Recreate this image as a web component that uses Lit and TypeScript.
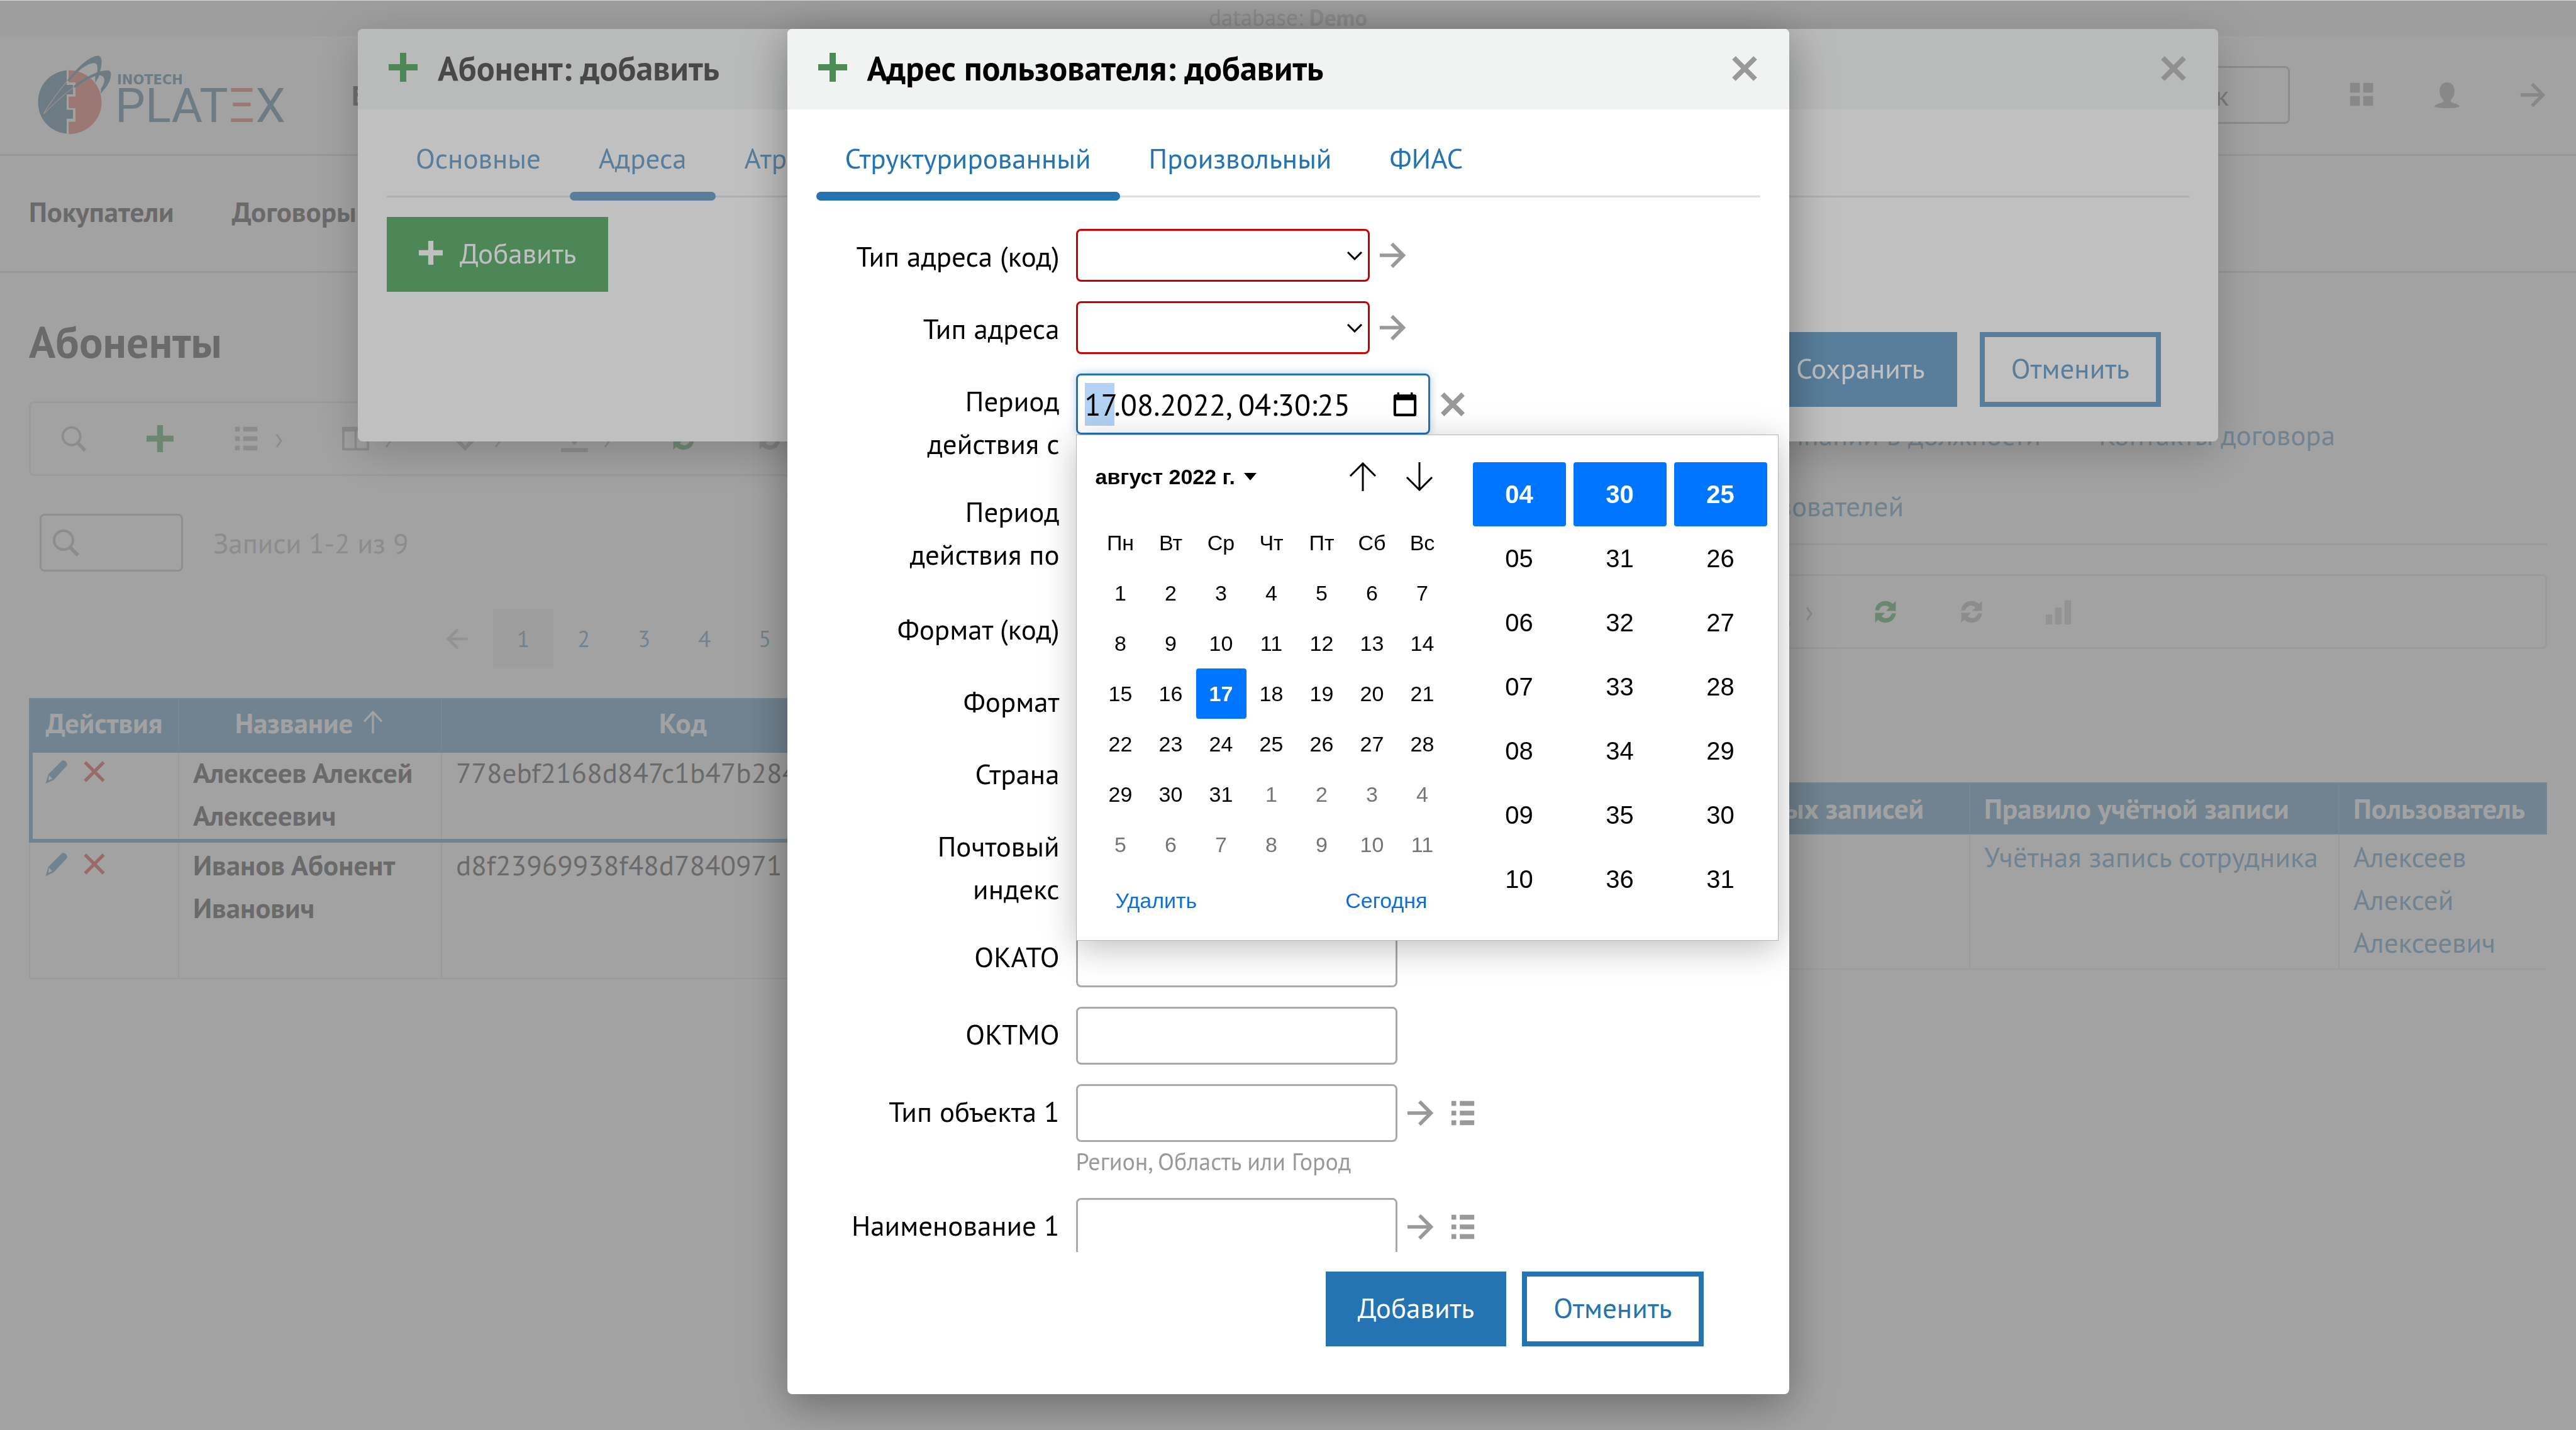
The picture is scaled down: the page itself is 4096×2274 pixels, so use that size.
import { LitElement, html, css, svg, nothing } from "lit";
import { customElement, query } from "lit/decorators.js";
import { classMap } from "lit/directives/class-map.js";

/* ---------- icons ---------- */

const icons = {
  plus: svg`<path d="M18 0h10v18h18v10H28v18H18V28H0V18h18z"/>`,
  close: svg`<path d="M6 6 40 40M40 6 6 40" fill="none" stroke="currentColor" stroke-width="8"/>`,
  arrow: svg`<path d="M2 23H40M22 4 41 23 22 42" fill="none" stroke="currentColor" stroke-width="6"/>`,
  list: svg`<path d="M4 3h8v8H4zM18 3h24v8H18zM4 19h8v8H4zM18 19h24v8H18zM4 35h8v8H4zM18 35h24v8H18z"/>`,
  search: svg`<circle cx="19" cy="19" r="15" fill="none" stroke="currentColor" stroke-width="4"/><path d="M30 31 42 43" fill="none" stroke="currentColor" stroke-width="6"/>`,
  columns: svg`<path d="M0 3h46v40H0zM4 11v28h17V11zM25 11v28h17V11z" fill-rule="evenodd"/>`,
  heart: svg`<path d="M23 44 2 22C-2 10 12 2 23 13 34 2 48 10 44 22zM23 35 35 21C33 16 27 16 23 21 19 16 13 16 11 21z" fill-rule="evenodd"/>`,
  download: svg`<path d="M19 2h8v16h10L23 34 9 18h10zM0 39h46v7H0z"/>`,
  grid: svg`<path d="M3 2h17v17H3zM26 2h17v17H26zM3 25h17v17H3zM26 25h17v17H26z"/>`,
  user: svg`<path d="M23 1c9 0 13 7 13 15 0 8-3 12-7 17 0 5 14 4 16 10-5 3-13 3-22 3S6 46 1 43c2-6 16-5 16-10-4-5-7-9-7-17C10 8 14 1 23 1z"/>`,
  bars: svg`<path d="M2 28h11v17H2zM18 16h11v29H18zM34 4h11v41H34z"/>`,
  pencil: svg`<path d="M3 45 8 28 33 3c5-2 11 4 9 9L18 38zM8 39l7-3-6-6z" fill-rule="evenodd"/>`,
  cross: svg`<path d="M6 6 40 40M40 6 6 40" fill="none" stroke="currentColor" stroke-width="6"/>`,
  up: svg`<path d="M23 44V4M6 21 23 3 40 21" fill="none" stroke="currentColor" stroke-width="4"/>`,
  thinUp: svg`<path d="M23 46V2M3 22 23 2 43 22" fill="none" stroke="currentColor" stroke-width="3"/>`,
  thinDown: svg`<path d="M23 0V44M3 24 23 44 43 24" fill="none" stroke="currentColor" stroke-width="3"/>`,
  calendar: svg`<path d="M8 0h4v4h22V0h4v4h3q4 0 4 4v34q0 4-4 4H5q-4 0-4-4V8q0-4 4-4h3zM6 15v26h34V15z" fill-rule="evenodd"/>`,
  refresh: svg`<path d="M2 20C3 8 12 1 23 1c6 0 11 2 15 6l6-6v20H24l7-7c-8-7-18-4-21 6zM44 26C43 38 34 45 23 45c-6 0-11-2-15-6l-6 6V25h20l-7 7c8 7 18 4 21-6z"/>`,
};
type IconName = keyof typeof icons;

const icon = (name: IconName, cls = "") =>
  html`<svg class="icon ${cls}" viewBox="0 0 46 46" aria-hidden="true">${icons[name]}</svg>`;

const chevron = html`<svg class="chevron" viewBox="0 0 12 22" aria-hidden="true">
  <path d="M2 1 9 11 2 21" fill="none" stroke="currentColor" stroke-width="3" />
</svg>`;

/* ---------- shared styles ---------- */

const base = css`
  * {
    box-sizing: border-box;
  }
  button,
  input,
  select {
    font: inherit;
    color: inherit;
    margin: 0;
    padding: 0;
    border: 0;
    background: none;
    border-radius: 0;
  }
  a {
    color: #2374b0;
    text-decoration: none;
  }
  .icon {
    display: block;
    flex: none;
    width: 42px;
    height: 42px;
    fill: currentColor;
  }
  .green {
    color: #0c8620;
  }
  .tabs {
    display: flex;
    border-bottom: 3px solid #ddd;
  }
  .tab {
    position: relative;
    padding: 19px 46px 26px;
  }
  .tab.active::after {
    content: "";
    position: absolute;
    left: 0;
    right: 0;
    bottom: -8px;
    height: 14px;
    border-radius: 7px;
    background: #2374b0;
  }
`;

/* ---------- calendar popup ---------- */

const WEEKDAYS = ["Пн", "Вт", "Ср", "Чт", "Пт", "Сб", "Вс"];

@customElement("date-popup")
class DatePopup extends LitElement {
  static styles = [
    base,
    css`
      :host {
        display: flex;
        gap: 40px;
        padding: 0 16px 0 30px;
        background: #fff;
        border: 1px solid #b4b6b6;
        box-shadow: 0 12px 50px rgba(0, 0, 0, 0.25);
        font: 34px/40px "Liberation Sans", Arial, sans-serif;
        color: #000;
      }
      .month {
        width: 560px;
      }
      .bar {
        display: flex;
        align-items: center;
        height: 131px;
      }
      .title {
        display: flex;
        align-items: center;
        gap: 14px;
        font-weight: bold;
        margin-right: auto;
      }
      .caret {
        border: 10px solid transparent;
        border-top: 12px solid #000;
        border-bottom: 0;
      }
      .step {
        width: 90px;
        display: flex;
        justify-content: center;
      }
      .step .icon {
        width: 46px;
        height: 46px;
      }
      .days {
        display: grid;
        grid-template-columns: repeat(7, 1fr);
        grid-auto-rows: 80px;
      }
      .days > * {
        display: grid;
        place-items: center;
      }
      .other {
        color: #757575;
      }
      .picked {
        background: #0075ff;
        color: #fff;
        font-weight: bold;
        border-radius: 4px;
      }
      .links {
        display: flex;
        justify-content: space-between;
        padding: 29px 32px 0;
        color: #0f6fd8;
      }
      .times {
        display: grid;
        grid-template-columns: repeat(3, 148px);
        gap: 0 12px;
        padding: 43px 0;
        font-size: 40px;
      }
      .time {
        display: flex;
        flex-direction: column;
      }
      .time button {
        height: 102px;
      }
    `,
  ];

  private days() {
    return Array.from({ length: 42 }, (_, i) => {
      const day = i < 31 ? i + 1 : i - 30;
      return html`<button
        class=${classMap({ other: i > 30, picked: i === 16 })}
      >${day}</button>`;
    });
  }

  private column(label: string, start: number) {
    return html`<div class="time" role="group" aria-label=${label}>
      ${Array.from({ length: 7 }, (_, i) => html`<button class=${classMap({ picked: i === 0 })}>${String(start + i).padStart(2, "0")}</button>`)}
    </div>`;
  }

  render() {
    return html`
      <div class="month">
        <div class="bar">
          <button class="title">август 2022 г.<span class="caret"></span></button>
          <button class="step" aria-label="Предыдущий месяц">${icon("thinUp")}</button>
          <button class="step" aria-label="Следующий месяц">${icon("thinDown")}</button>
        </div>
        <div class="days">
          ${WEEKDAYS.map((d) => html`<span>${d}</span>`)} ${this.days()}
        </div>
        <div class="links"><button>Удалить</button><button>Сегодня</button></div>
      </div>
      <div class="times">
        ${this.column("Часы", 4)} ${this.column("Минуты", 30)} ${this.column("Секунды", 25)}
      </div>
    `;
  }
}

/* ---------- application ---------- */

interface Field {
  id: string;
  label: string;
  kind: "select" | "text" | "date" | "openDate";
  required?: boolean;
  lookup?: boolean;
  hint?: string;
}

const FIELDS: Field[] = [
  { id: "type-code", label: "Тип адреса (код)", kind: "select", required: true },
  { id: "type", label: "Тип адреса", kind: "select", required: true },
  { id: "from", label: "Период действия с", kind: "openDate" },
  { id: "to", label: "Период действия по", kind: "date" },
  { id: "format-code", label: "Формат (код)", kind: "select" },
  { id: "format", label: "Формат", kind: "select" },
  { id: "country", label: "Страна", kind: "select" },
  { id: "zip", label: "Почтовый индекс", kind: "text" },
  { id: "okato", label: "ОКАТО", kind: "text" },
  { id: "oktmo", label: "ОКТМО", kind: "text" },
  { id: "obj1", label: "Тип объекта 1", kind: "text", lookup: true, hint: "Регион, Область или Город" },
  { id: "name1", label: "Наименование 1", kind: "text", lookup: true },
];

const CUSTOMERS = [
  { name: "Алексеев Алексей Алексеевич", code: "778ebf2168d847c1b47b284", selected: true },
  { name: "Иванов Абонент Иванович", code: "d8f23969938f48d7840971", selected: false },
];

@customElement("app-root")
class AppRoot extends LitElement {
  static styles = [
    base,
    css`
      :host {
        display: block;
        font: 45px/68px "PT Sans", "Noto Sans", sans-serif;
        color: #000;
      }
      .page {
        min-height: 100vh;
        overflow: hidden;
        border-top: 1px solid #d8d8d8;
        background: #fff;
      }
      .topbar {
        height: 56px;
        background: #e9e9e9;
        color: #999;
        text-align: center;
        font-size: 37px;
        line-height: 52px;
      }
      .header {
        display: flex;
        align-items: center;
        height: 191px;
        padding: 0 48px 0 60px;
        border-bottom: 3px solid #ccc;
      }
      .logo {
        display: flex;
        align-items: center;
        gap: 6px;
        width: 499px;
        color: #135276;
      }
      .emblem {
        width: 117px;
        height: 126px;
      }
      .brand {
        display: flex;
        flex-direction: column;
        font-family: Roboto, sans-serif;
        font-size: 76px;
        line-height: 62px;
        padding-top: 14px;
      }
      .maker {
        padding-left: 3px;
        font: bold 21px/20px "DejaVu Sans", sans-serif;
      }
      .red {
        color: #e0402f;
      }
      .header a {
        color: #000;
        font-weight: bold;
        margin-right: auto;
      }
      .find {
        width: 400px;
        height: 92px;
        padding: 0 94px 0 30px;
        border: 3px solid #999;
        border-radius: 8px;
        text-align: right;
        margin-right: 93px;
      }
      .find::placeholder {
        color: #444;
        opacity: 1;
      }
      .tools {
        display: flex;
        gap: 94px;
        color: #888;
      }
      .nav {
        display: flex;
        gap: 92px;
        padding: 54px 46px 61px;
        border-bottom: 3px solid #ccc;
        font-weight: bold;
      }
      .nav a {
        color: #000;
      }
      h1 {
        margin: 64px 46px 50px;
        font-size: 70px;
        line-height: 90px;
      }
      .panels {
        display: grid;
        grid-template-columns: minmax(0, 17fr) minmax(0, 19fr);
        gap: 38px;
        padding: 0 46px;
      }
      .toolbar {
        display: flex;
        align-items: center;
        height: 119px;
        border: 3px solid #ddd;
        border-radius: 8px;
        color: #999;
      }
      .toolbar button {
        display: flex;
        align-items: center;
        gap: 25px;
        padding: 0 47px;
      }
      .toolbar .icon {
        width: 43px;
        height: 43px;
      }
      .chevron {
        flex: none;
        width: 12px;
        height: 22px;
        margin-top: 6px;
      }
      .toolbar .pale {
        color: #bbb;
      }
      .toolbar .turn .icon {
        width: 36px;
        height: 42px;
        margin: 0 4px 0 3px;
      }
      .filter {
        display: flex;
        align-items: center;
        gap: 48px;
        margin: 60px 0 59px 17px;
        color: #999;
      }
      .quick {
        display: flex;
        align-items: center;
        width: 228px;
        height: 92px;
        padding: 0 16px;
        border: 3px solid #aaa;
        border-radius: 8px;
      }
      .quick .icon {
        width: 46px;
        height: 46px;
      }
      .quick input {
        flex: 1;
        min-width: 0;
      }
      .pager {
        display: flex;
        align-items: center;
        height: 95px;
        margin: 0 0 47px 663px;
        font-size: 37px;
      }
      .pager a {
        flex: none;
        width: 96px;
        line-height: 95px;
        text-align: center;
      }
      .pager .current {
        background: #e9e9e9;
      }
      .pager .back {
        width: 36px;
        height: 36px;
        margin-right: 39px;
        transform: scaleX(-1);
        color: #bbb;
      }
      table {
        width: 100%;
        table-layout: fixed;
        border-collapse: collapse;
      }
      th {
        padding: 3px 22px 8px;
        background: #2374b0;
        color: #fff;
        border: 2px solid #4a86b4;
        white-space: nowrap;
      }
      td {
        padding: 1px 22px 8px;
        border: 2px solid #ddd;
        vertical-align: top;
      }
      .name {
        font-weight: bold;
      }
      .customers tr.selected {
        outline: 6px solid #2374b0;
        outline-offset: -5px;
      }
      .customers tr:last-child td {
        height: 217px;
      }
      .c-actions {
        width: 237px;
      }
      .c-name {
        width: 418px;
      }
      .c-code {
        width: 768px;
      }
      .sorted {
        display: flex;
        align-items: center;
        justify-content: center;
        gap: 13px;
      }
      .sorted .icon {
        width: 38px;
        height: 38px;
      }
      .actions {
        display: flex;
        gap: 20px;
        padding-top: 12px;
      }
      .actions .edit {
        color: #2374b0;
      }
      .actions .drop {
        color: #d40000;
      }
      .actions .icon {
        width: 40px;
        height: 42px;
      }
      .row-end {
        display: flex;
        justify-content: flex-end;
      }
      .row-end .tab {
        white-space: nowrap;
      }
      .upper {
        padding-right: 291px;
      }
      .lower {
        padding-right: 977px;
        border-bottom: 3px solid #ddd;
      }
      .side .toolbar {
        margin: 46px 0 212px;
      }
      .side th,
      .side td {
        text-align: left;
      }
      .side th {
        padding-top: 5px;
        padding-bottom: 6px;
      }
      .side td:last-child {
        border-right: 0;
      }
      .c-group {
        width: 630px;
      }
      .c-rule {
        width: 587px;
      }
      .c-user {
        width: 330px;
      }

      /* overlays and dialogs */
      .backdrop {
        position: fixed;
        inset: 1px 0 0;
        display: flex;
        align-items: flex-start;
        justify-content: center;
        padding: 45px 0 57px;
        background: rgba(136, 136, 136, 0.53);
      }
      .dialog {
        display: flex;
        flex-direction: column;
        width: 100%;
        background: #fff;
        border-radius: 8px;
        box-shadow: 0 16px 70px rgba(0, 0, 0, 0.36);
      }
      .wide {
        max-width: 2958px;
      }
      .narrow {
        max-width: 1593px;
        height: 100%;
      }
      .head {
        display: flex;
        align-items: center;
        gap: 32px;
        height: 128px;
        padding: 0 48px 0 49px;
        background: #f1f2f2;
        border-radius: 8px 8px 0 0;
      }
      .head h2 {
        margin: 0 auto 0 0;
        font-size: 54px;
        line-height: 68px;
        padding-bottom: 5px;
      }
      .head .icon {
        width: 46px;
        height: 46px;
        margin-bottom: 6px;
      }
      .head .close {
        color: #999;
      }
      .head .close .icon {
        margin-bottom: 2px;
      }
      .narrow .head .green {
        color: #4d8b56;
      }
      .dialog .tabs {
        margin: 24px 46px 0;
      }
      .btn {
        display: flex;
        align-items: center;
        gap: 27px;
        padding: 23px 51px 28px;
        border: 0;
        color: #fff;
        background: #2374b0;
      }
      .btn.add {
        align-self: flex-start;
        margin: 31px 46px 64px;
        background: #0c8620;
      }
      .btn .icon {
        width: 38px;
        height: 38px;
      }
      .btn.ghost {
        padding: 15px 42px 20px;
        border: 8px solid #2374b0;
        background: #fff;
        color: #2374b0;
      }
      .foot {
        display: flex;
        justify-content: flex-end;
        gap: 36px;
        padding: 0 91px 55px;
      }
      .narrow .foot {
        gap: 25px;
        padding: 31px 136px 76px;
      }
      .form {
        flex: 1;
        min-height: 0;
        overflow: hidden;
        display: flex;
        flex-direction: column;
        gap: 31px;
        padding: 50px 0 0 46px;
      }
      .field {
        display: grid;
        grid-template-columns: 387px 1fr;
        gap: 26px;
        flex: none;
      }
      .field label {
        padding-top: 9px;
        text-align: right;
        justify-self: end;
      }
      .two {
        max-width: 240px;
      }
      .control {
        display: flex;
        align-items: center;
        gap: 14px;
        color: #999;
      }
      .control .icon {
        width: 44px;
        height: 44px;
      }
      .control .icon.more {
        margin-left: 10px;
      }
      .date {
        min-height: 156px;
      }
      .pick {
        position: relative;
        width: 467px;
      }
      .pick select {
        display: block;
        appearance: none;
        width: 100%;
        height: 84px;
        border: 3px solid #aaa;
        border-radius: 8px;
        background: #fff;
      }
      .pick select.required {
        border-color: #c00;
      }
      .pick svg {
        position: absolute;
        right: 11px;
        top: 36px;
        width: 26px;
        height: 14px;
      }
      .box {
        width: 511px;
        height: 92px;
        padding: 0 12px;
        border: 3px solid #aaa;
        border-radius: 8px;
        color: #000;
      }
      .when {
        position: relative;
        display: flex;
        align-items: center;
        width: 563px;
        height: 97px;
        padding: 0 18px 0 11px;
        border: 3px solid #2374b0;
        border-radius: 8px;
        box-shadow: 0 0 14px rgba(35, 116, 176, 0.35);
        color: #000;
      }
      .when input {
        flex: 1;
        min-width: 0;
        font-size: 48px;
        outline: none;
      }
      .when input::selection {
        background: #b2d1f3;
        color: #000;
      }
      .when .icon {
        width: 38px;
        height: 38px;
      }
      .when date-popup {
        position: absolute;
        z-index: 1;
        top: 94px;
        left: -3px;
        width: 1117px;
        height: 805px;
      }
      .hint {
        padding-top: 4px;
        font-size: 38px;
        line-height: 54px;
        color: #999;
      }
    `,
  ];

  @query("#from") private fromInput!: HTMLInputElement;

  firstUpdated() {
    this.fromInput.focus({ preventScroll: true });
    this.fromInput.setSelectionRange(0, 2);
  }

  private tool(name: IconName, label: string, opts: { menu?: boolean; cls?: string } = {}) {
    return html`<button class=${opts.cls ?? ""} aria-label=${label}>
      ${icon(name)}${opts.menu ? chevron : nothing}
    </button>`;
  }

  private toolbar() {
    return html`<div class="toolbar">
      ${this.tool("search", "Поиск")} ${this.tool("plus", "Добавить", { cls: "green" })}
      ${this.tool("list", "Действия", { menu: true })} ${this.tool("columns", "Колонки", { menu: true })}
      ${this.tool("heart", "Избранное", { menu: true })} ${this.tool("download", "Выгрузить", { menu: true })}
      ${this.tool("refresh", "Обновить", { cls: "turn green" })}
      ${this.tool("refresh", "Автообновление", { cls: "turn" })}
      ${this.tool("bars", "Диаграмма", { cls: "pale" })}
    </div>`;
  }

  private logo() {
    return html`<div class="logo">
      <svg class="emblem" viewBox="58 78 417 528" preserveAspectRatio="none" aria-hidden="true">
        <path fill="currentColor" d="M222 178C125 190 60 280 60 390S125 588 222 600V500H258V440H222V338H258V275H222Z" />
        <path fill="#e0402f" d="M233 178C340 178 420 275 420 390S340 603 233 603V520H272V430H233V352H272V258H233Z" />
        <path fill="currentColor" d="M225 245C290 150 350 85 400 80 425 85 425 130 410 190L403 225 383 262 384 215 395 190C400 150 395 126 370 130 330 138 290 175 235 250Z" />
        <path fill="currentColor" d="M262 280C330 220 400 177 455 177 480 180 475 215 465 250 450 290 430 310 415 335L416 300C440 260 445 215 410 212 370 212 320 250 268 296Z" />
        <path fill="none" stroke="#d9a59c" stroke-width="5" d="M92 465C130 390 180 310 228 245M92 468C150 400 210 335 265 288" />
      </svg>
      <div class="brand"><span class="maker">INOTECH</span><span>PLAT<span class="red">Ξ</span>X</span></div>
    </div>`;
  }

  private page() {
    return html`<div class="page">
      <div class="topbar">database: <b>Demo</b></div>
      <header class="header">
        ${this.logo()}
        <a href="#">Биллинг</a>
        <input class="find" type="text" placeholder="Поиск" aria-label="Поиск" />
        <div class="tools">
          <button aria-label="Приложения">${icon("grid")}</button>
          <button aria-label="Профиль">${icon("user")}</button>
          <button aria-label="Выход">${icon("arrow")}</button>
        </div>
      </header>
      <nav class="nav"><a href="#">Покупатели</a><a href="#">Договоры</a></nav>
      <h1>Абоненты</h1>
      <div class="panels">
        <section>
          ${this.toolbar()}
          <div class="filter">
            <label class="quick">${icon("search")}<input type="text" aria-label="Быстрый поиск" /></label>
            <span>Записи 1-2 из 9</span>
          </div>
          <nav class="pager">
            ${icon("arrow", "back")}
            ${[1, 2, 3, 4, 5].map((n) => html`<a href="#" class=${classMap({ current: n === 1 })}>${n}</a>`)}
          </nav>
          <table class="customers">
            <colgroup>
              <col class="c-actions" /><col class="c-name" /><col class="c-code" /><col />
            </colgroup>
            <thead>
              <tr>
                <th>Действия</th>
                <th><span class="sorted">Название${icon("up")}</span></th>
                <th>Код</th>
                <th></th>
              </tr>
            </thead>
            <tbody>
              ${CUSTOMERS.map(
                (c) => html`<tr class=${classMap({ selected: c.selected })}>
                  <td>
                    <div class="actions">
                      <button class="edit" aria-label="Изменить">${icon("pencil")}</button>
                      <button class="drop" aria-label="Удалить">${icon("cross")}</button>
                    </div>
                  </td>
                  <td class="name">${c.name}</td>
                  <td>${c.code}</td>
                  <td></td>
                </tr>`,
              )}
            </tbody>
          </table>
        </section>
        <section class="side">
          <div class="row-end upper">
            <a class="tab" href="#">Компании в должности</a><a class="tab" href="#">Контакты договора</a>
          </div>
          <div class="row-end lower"><a class="tab" href="#">Группы пользователей</a></div>
          ${this.toolbar()}
          <table>
            <colgroup>
              <col /><col class="c-group" /><col class="c-rule" /><col class="c-user" />
            </colgroup>
            <thead>
              <tr>
                <th></th>
                <th>Владелец учётных записей</th>
                <th>Правило учётной записи</th>
                <th>Пользователь</th>
              </tr>
            </thead>
            <tbody>
              <tr>
                <td></td>
                <td><a href="#">Роль сотрудник</a></td>
                <td><a href="#">Учётная запись сотрудника</a></td>
                <td><a href="#">Алексеев Алексей Алексеевич</a></td>
              </tr>
            </tbody>
          </table>
        </section>
      </div>
    </div>`;
  }

  private head(title: string) {
    return html`<header class="head">
      ${icon("plus", "green")}
      <h2>${title}</h2>
      <button class="close" aria-label="Закрыть">${icon("close")}</button>
    </header>`;
  }

  private tabs(names: string[], active: number) {
    return html`<nav class="tabs">
      ${names.map((n, i) => html`<a href="#" class=${classMap({ tab: true, active: i === active })}>${n}</a>`)}
    </nav>`;
  }

  private control(f: Field) {
    if (f.kind === "select") {
      return html`<div class="control">
        <div class="pick">
          <select id=${f.id} class=${classMap({ required: !!f.required })}></select>
          <svg viewBox="0 0 26 14" aria-hidden="true"><path d="M2 1 13 12 24 1" fill="none" stroke="#000" stroke-width="3" /></svg>
        </div>
        ${icon("arrow")}
      </div>`;
    }
    if (f.kind === "openDate") {
      return html`<div class="control">
        <div class="when">
          <input id=${f.id} type="text" value="17.08.2022, 04:30:25" />
          ${icon("calendar")}
          <date-popup></date-popup>
        </div>
        ${icon("close")}
      </div>`;
    }
    return html`<div>
      <div class="control">
        <input class="box" id=${f.id} type="text" />
        ${f.lookup ? html`${icon("arrow")}${icon("list", "more")}` : nothing}
      </div>
      ${f.hint ? html`<div class="hint">${f.hint}</div>` : nothing}
    </div>`;
  }

  private field(f: Field) {
    return html`<div class=${classMap({ field: true, date: f.kind === "date" })}>
      <label for=${f.id} class=${classMap({ two: f.label.length > 13 && /^П/.test(f.label) })}>${f.label}</label>
      <div>${this.control(f)}</div>
    </div>`;
  }

  render() {
    return html`
      ${this.page()}
      <div class="backdrop">
        <section class="dialog wide" role="dialog" aria-label="Абонент: добавить">
          ${this.head("Абонент: добавить")} ${this.tabs(["Основные", "Адреса", "Атрибуты"], 1)}
          <button class="btn add">${icon("plus")}Добавить</button>
          <footer class="foot"><button class="btn">Сохранить</button><button class="btn ghost">Отменить</button></footer>
        </section>
      </div>
      <div class="backdrop">
        <section class="dialog narrow" role="dialog" aria-label="Адрес пользователя: добавить">
          ${this.head("Адрес пользователя: добавить")}
          ${this.tabs(["Структурированный", "Произвольный", "ФИАС"], 0)}
          <form class="form">${FIELDS.map((f) => this.field(f))}</form>
          <footer class="foot"><button class="btn">Добавить</button><button class="btn ghost">Отменить</button></footer>
        </section>
      </div>
    `;
  }
}
